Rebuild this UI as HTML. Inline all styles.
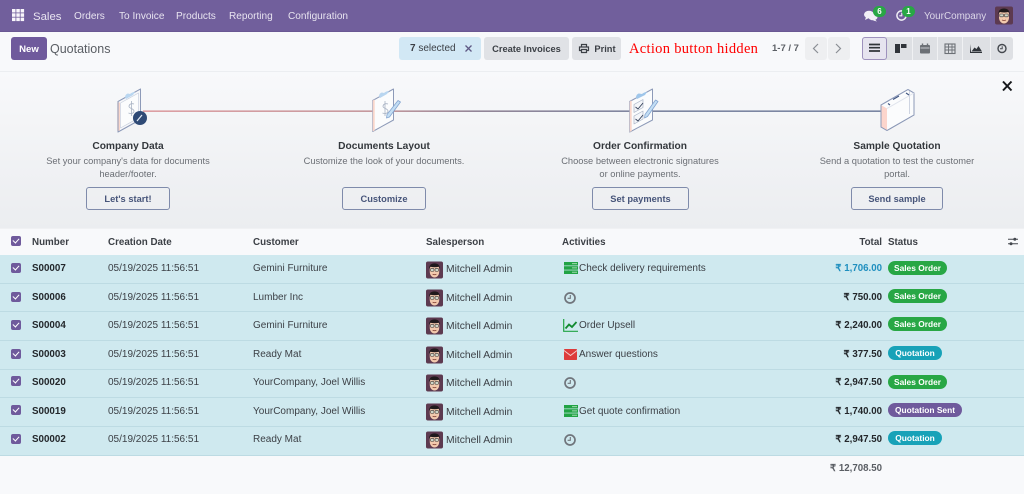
<!DOCTYPE html>
<html lang="en"><head><meta charset="utf-8"><title>Quotations</title>
<style>
html,body{margin:0;padding:0;background:#f8f9fb}
body{width:1024px;height:494px;overflow:hidden;position:relative;background:#f8f9fb;font-family:"Liberation Sans",sans-serif;font-size:10.1px;color:#3c4046;filter:blur(.3px)}
.t{position:absolute;white-space:nowrap;line-height:14px;height:14px;margin-top:1px}
.c{transform:translateX(-50%);text-align:center}
.r{text-align:right}
.b{font-weight:bold}
.box{position:absolute}
nav{position:absolute;left:0;top:0;width:1024px;height:31px;background:#715f9c;border-bottom:1px solid #6a5893}
nav .t{color:#e8e4f0;top:9px}
.btn{position:absolute;top:37px;height:23px;line-height:24px;text-align:center;border-radius:3px;background:#e0e2e6;color:#3c4046;font-weight:bold;font-size:9.3px}
.panel{position:absolute;left:0;top:71px;width:1024px;height:157px;background:linear-gradient(#f8f9fb 0%,#f4f5f7 30%,#ebedf0 100%);border-top:1px solid #eceef1}
.head{color:#3c4046;font-weight:bold;font-size:9.8px}
.desc{color:#6b6f75;font-size:9.3px}
.ttl{color:#34383d;font-weight:bold;font-size:10.2px}
.ob{position:absolute;top:187px;height:21px;line-height:23px;border:1px solid #7f8bab;border-radius:3px;text-align:center;color:#47557a;font-weight:bold;font-size:9.3px}
.row{position:absolute;left:0;width:1024px;background:#cfe9ef;border-bottom:1px solid #bddbe3;box-sizing:border-box}
.cb{position:absolute;left:11px;width:10px;height:10px;background:#6f5a9c;border-radius:2px}
.cb:after{content:"";position:absolute;left:3px;top:1px;width:3px;height:5px;border:solid #fff;border-width:0 1.4px 1.4px 0;transform:rotate(42deg)}
.badge{position:absolute;left:888px;height:14px;line-height:14px;border-radius:7px;color:#fff;text-align:center;font-size:8.4px;font-weight:bold}
.so{width:59px;background:#28a745}.qu{width:54px;background:#17a2b8}.qs{width:74px;background:#6f5a9c}
.num{left:32px;font-weight:bold;color:#23272b;font-size:9.8px}
.dt{left:108px;font-size:10px}
.cu{left:253px;font-size:10px}
.sp{left:446px;font-size:10.3px}
.ac{left:579px;font-size:10px}
.to{right:142px;font-weight:bold;color:#23272b;font-size:9.7px}
svg{position:absolute;overflow:visible}
</style></head><body>

<svg width="0" height="0" style="position:absolute"><defs>
<symbol id="av" viewBox="0 0 18 18">
<rect width="18" height="18" rx="2" fill="#5d3a50"/>
<path d="M4 8c0-3 2-5 5-5s5 2 5 5v3c0 3-2 6-5 6s-5-3-5-6z" fill="#f2c9ad"/>
<path d="M3.500 8c-.5-4 2-6 5.500-6s6 2 5.500 6l-1-2.500c-3 .8-6 .6-8.800 0z" fill="#1f1a1c"/>
<rect x="4.800" y="7.500" width="3.600" height="2.800" rx=".6" fill="#cfd6c8" stroke="#333" stroke-width=".6"/>
<rect x="9.600" y="7.500" width="3.600" height="2.800" rx=".6" fill="#cfd6c8" stroke="#333" stroke-width=".6"/>
<path d="M7 13.500c1.300.6 2.700.6 4 0" stroke="#8a4a3c" stroke-width=".8" fill="none"/>
</symbol>
<symbol id="clk" viewBox="0 0 12 12">
<circle cx="6" cy="6" r="5" fill="none" stroke="#70757c" stroke-width="1.700"/>
<path d="M6.300 3v3.300H3.600" fill="none" stroke="#70757c" stroke-width="1.100"/>
</symbol>
<symbol id="srv" viewBox="0 0 14 12">
<rect width="14" height="3.500" fill="#21a344"/><rect y="4.200" width="14" height="3.500" fill="#21a344"/><rect y="8.400" width="14" height="3.600" fill="#21a344"/>
<rect x="8" y="1.300" width="5" height=".8" fill="#bfe6c9"/><rect x="8" y="5.500" width="5" height=".8" fill="#bfe6c9"/><rect x="8" y="9.800" width="5" height=".8" fill="#bfe6c9"/>
</symbol>
</defs></svg>

<nav>
<svg style="left:12px;top:9px" width="12" height="12" viewBox="0 0 12 12" fill="#f8f6fb">
<rect width="3.500" height="3.500"/><rect x="4.300" width="3.500" height="3.500"/><rect x="8.600" width="3.500" height="3.500"/>
<rect y="4.300" width="3.500" height="3.500"/><rect x="4.300" y="4.300" width="3.500" height="3.500"/><rect x="8.600" y="4.300" width="3.500" height="3.500"/>
<rect y="8.600" width="3.500" height="3.500"/><rect x="4.300" y="8.600" width="3.500" height="3.500"/><rect x="8.600" y="8.600" width="3.500" height="3.500"/>
</svg>
<span class="t" style="left:33px;font-size:11.4px">Sales</span>
<span class="t" style="left:74px">Orders</span>
<span class="t" style="left:119px">To Invoice</span>
<span class="t" style="left:176px">Products</span>
<span class="t" style="left:229px">Reporting</span>
<span class="t" style="left:288px">Configuration</span>
<svg style="left:864px;top:10px" width="14" height="12" viewBox="0 0 14 12" fill="#f1eff6">
<ellipse cx="5" cy="4.500" rx="5" ry="3.800"/><path d="M2 7l-1 3 4-2z"/><ellipse cx="9" cy="7" rx="4.500" ry="3.300"/><path d="M11 9.500l2 2-4-1z"/></svg>
<div class="box" style="left:873px;top:6px;width:13px;height:11px;border-radius:6px;background:#28a745;color:#fff;font-size:8px;line-height:11px;text-align:center;font-weight:bold">6</div>
<svg style="left:896px;top:10px" width="11" height="11" viewBox="0 0 12 12"><circle cx="6" cy="6" r="5" fill="none" stroke="#f1eff6" stroke-width="1.600"/><path d="M6.300 3v3.300H3.600" fill="none" stroke="#f1eff6" stroke-width="1.200"/></svg>
<div class="box" style="left:902px;top:6px;width:13px;height:11px;border-radius:6px;background:#28a745;color:#fff;font-size:8px;line-height:11px;text-align:center;font-weight:bold">1</div>
<span class="t" style="left:924px;color:#dcd7e8;font-size:9.9px">YourCompany</span>
<svg style="left:995px;top:6px" width="18" height="19"><use href="#av"/></svg>
</nav>

<div class="btn" style="left:11px;width:36px;background:#6f5a9c;color:#fff;font-size:9.6px;line-height:25px">New</div>
<span class="t" style="left:50px;top:41px;font-size:12.500px;color:#5a5e64">Quotations</span>
<div class="btn" style="left:399px;width:82px;background:#d2e8f5;font-weight:normal;font-size:10px;text-align:left;box-sizing:border-box;padding-left:11px"><b>7</b> selected</div>
<svg style="left:465px;top:45px" width="7" height="7" viewBox="0 0 7 7"><path d="M.5.500l6 6M6.500.500l-6 6" stroke="#5f5a85" stroke-width="1.300"/></svg>
<div class="btn" style="left:484px;width:85px">Create Invoices</div>
<div class="btn" style="left:572px;width:49px;box-sizing:border-box;padding-left:17px">Print</div>
<svg style="left:579px;top:44px" width="10" height="9" viewBox="0 0 10 9"><path d="M2.500 3V.500h5V3M2.500 6.500H.5V3h9v3.500h-2M2.500 5.500h5v3h-5z" fill="none" stroke="#3c4046" stroke-width="1.200"/></svg>
<span class="t" style="left:629px;top:41px;font-family:'Liberation Serif',serif;font-size:14.500px;color:#f00;letter-spacing:.3px">Action button hidden</span>
<span class="t" style="left:772px;top:41px;font-size:9.500px;font-weight:bold;color:#5c6066">1-7 / 7</span>
<div class="btn" style="left:805px;width:22px;background:#eeeff1"></div>
<div class="btn" style="left:828px;width:22px;background:#eeeff1"></div>
<svg style="left:812px;top:43px" width="32" height="11" fill="none" stroke="#8a8e94" stroke-width="1.200"><path d="M6 1L1.500 5.500 6 10M24 1l4.500 4.500L24 10"/></svg>

<div class="box" style="left:862px;top:37px;width:151px;height:23px;background:#dee0e4;border-radius:3px"></div>
<div class="box" style="left:912px;top:37px;width:1px;height:23px;background:#f0f1f3"></div>
<div class="box" style="left:937px;top:37px;width:1px;height:23px;background:#f0f1f3"></div>
<div class="box" style="left:962px;top:37px;width:1px;height:23px;background:#f0f1f3"></div>
<div class="box" style="left:990px;top:37px;width:1px;height:23px;background:#f0f1f3"></div>
<div class="box" style="left:862px;top:37px;width:25px;height:23px;box-sizing:border-box;background:#e6e4ef;border:1px solid #9e92bd;border-radius:3px"></div>
<svg style="left:868px;top:43px" width="140" height="11" viewBox="0 0 140 11">
<path d="M1 1.500h11M1 4.700h11M1 8h11" stroke="#30343a" stroke-width="1.700"/>
<path d="M27 1h5v9h-5zM33 1h5.500v4H33z" fill="#30343a"/>
<rect x="52" y="2" width="10" height="8.500" rx="1" fill="#6c7076"/><path d="M54.500 .5v2M59.500 .5v2" stroke="#6c7076" stroke-width="1.400"/><path d="M52.500 5h9" stroke="#dee0e4" stroke-width=".8"/>
<rect x="77" y="1" width="10" height="9.500" fill="none" stroke="#6c7076" stroke-width="1.100"/><path d="M77 4h10M77 7h10M80.500 1v9.500M84 1v9.500" stroke="#6c7076" stroke-width=".9"/>
<path d="M102 1v9h12v-1h-11z M103.500 8.500l3-4 2 1.500 2-3 3.500 5.500z" fill="#30343a"/>
<circle cx="134" cy="5.500" r="4" fill="none" stroke="#44484e" stroke-width="1.400"/><path d="M134.200 3.200v2.500H132" fill="none" stroke="#44484e" stroke-width="1"/>
</svg>

<div class="panel"></div>

<svg style="left:0;top:0" width="1024" height="228" viewBox="0 0 1024 228">
<defs><linearGradient id="ln" gradientUnits="userSpaceOnUse" x1="143" y1="0" x2="882" y2="0">
<stop offset="0" stop-color="#d88a8f"/><stop offset=".32" stop-color="#b98288"/><stop offset=".45" stop-color="#7b6a80"/><stop offset=".7" stop-color="#5f6a8c"/><stop offset="1" stop-color="#5c6a8e"/></linearGradient></defs>
<rect x="143" y="110.500" width="740" height="1.300" fill="url(#ln)"/>

<g stroke="#8d9ab8" stroke-width="1" stroke-linejoin="round">
<path d="M118 101.500L140.500 89V119.500L118 132Z" fill="#f6f7fa"/>
<path d="M118 101.500L117.300 103V130.500L118 132L120 131V103Z" fill="#f9d6cb" stroke="none"/>
<path d="M118 101.500L140.500 89V119.500L118 132Z" fill="none"/>
<path d="M120.500 103L138.500 93V118L120.500 128Z" fill="#fbfcfd" stroke="#c9d0de" stroke-width=".7"/>
<path d="M125 97c.5-2.500 2-3.500 3-3.500l2 .5c1-1 3-2 5-2l-2 3-7 4z" fill="#b9d6f0" stroke="none"/>
<circle cx="140" cy="118" r="7" fill="#2f4a76" stroke="none"/>
<path d="M137 121l5-6" stroke="#e6edf6" stroke-width="1.200"/>
<path d="M134 104c-3-1-5 .5-5 2.500s5 2 5 4.500-3 3-5.500 2M131.500 101v15" fill="none" stroke="#a9b3c4" stroke-width=".8"/>
</g>

<g stroke="#8d9ab8" stroke-width="1" stroke-linejoin="round">
<path d="M372.700 100.500L393.500 89V120L372.700 131.500Z" fill="#fbfcfd"/>
<path d="M372.700 100.500v31l2 -1v-31z" fill="#f9d6cb" stroke="none"/>
<path d="M379 96c.5-2.500 2-3.500 3-3.500l2 .5c1-1 3-2 5-2l-2 3-7 4z" fill="#b9d6f0" stroke="none"/>
<path d="M388 104c-3-1-5 .5-5 2.500s5 2 5 4.500-3 3-5.500 2M385 101v15" fill="none" stroke="#a9b3c4" stroke-width=".8"/>
<path d="M398 100.500l2.500 1.500-11 15-3 1 .5-3.500z" fill="#c3def4" stroke="#84a5d0" stroke-width=".8"/>
</g>

<g stroke="#8d9ab8" stroke-width="1" stroke-linejoin="round">
<path d="M629.700 101.500L652.500 89V120L629.700 132Z" fill="#fbfcfd"/>
<path d="M629.700 101.500v30.500l2-1v-30.500z" fill="#f9d6cb" stroke="none"/>
<path d="M636 97c.5-2.500 2-3.500 3-3.500l3 .5c1-1 3-2 5-2l-2 3-8 4z" fill="#9fc6ea" stroke="none"/>
<path d="M634 104.500l9-5v8l-9 5zM634 116l9-5v8l-9 5z" fill="#f4f6f9" stroke="#aab4c6" stroke-width=".7"/>
<path d="M635.500 107l2.500 2 5-6M635.500 119l2.500 2 5-6" fill="none" stroke="#34405a" stroke-width=".9"/>
<path d="M655.500 100l2.500 1.500-10.500 15-3 1.500.5-3.500z" fill="#c3def4" stroke="#84a5d0" stroke-width=".8"/>
</g>

<g stroke="#8d9ab8" stroke-width="1" stroke-linejoin="round">
<path d="M881 105L908 89.500L914 93V115L887 130.500L881 127Z" fill="#fbfcfd"/>
<path d="M881 105L887 108.500V130.500L881 127Z" fill="#fcd5cc" stroke="none"/>
<path d="M881 105L908 89.500L914 93V115L887 130.500L881 127Z" fill="none"/>
<path d="M887 108.500L914 93" fill="none" stroke="#dfe3ec"/>
<path d="M909.500 91v23" fill="none" stroke="#cfd5e2"/>
<path d="M888 103.500l2 1.500M906 93l3 2M893 99.500l6-3.500" fill="none" stroke="#3f5580" stroke-width="1.100"/>
</g>

<path d="M1003 81.500l8.500 9M1011.500 81.500l-8.500 9" stroke="#16181b" stroke-width="2"/>
</svg>

<span class="t c ttl" style="left:128px;top:139px">Company Data</span>
<span class="t c desc" style="left:128px;top:153px">Set your company's data for documents</span>
<span class="t c desc" style="left:128px;top:166px">header/footer.</span>
<div class="ob" style="left:86px;width:82px">Let's start!</div>

<span class="t c ttl" style="left:384px;top:139px">Documents Layout</span>
<span class="t c desc" style="left:384px;top:153px">Customize the look of your documents.</span>
<div class="ob" style="left:342px;width:82px">Customize</div>

<span class="t c ttl" style="left:640px;top:139px">Order Confirmation</span>
<span class="t c desc" style="left:640px;top:153px">Choose between electronic signatures</span>
<span class="t c desc" style="left:640px;top:166px">or online payments.</span>
<div class="ob" style="left:592px;width:95px">Set payments</div>

<span class="t c ttl" style="left:897px;top:139px">Sample Quotation</span>
<span class="t c desc" style="left:897px;top:153px">Send a quotation to test the customer</span>
<span class="t c desc" style="left:897px;top:166px">portal.</span>
<div class="ob" style="left:851px;width:90px">Send sample</div>

<!-- header -->
<div class="box" style="left:0;top:228px;width:1024px;height:27px;background:#f8f9fb;border-top:1px solid #f0f1f3;box-sizing:border-box"></div>
<div class="cb" style="top:236px"></div>
<span class="t head" style="left:32px;top:235px">Number</span>
<span class="t head" style="left:108px;top:235px">Creation Date</span>
<span class="t head" style="left:253px;top:235px">Customer</span>
<span class="t head" style="left:426px;top:235px">Salesperson</span>
<span class="t head" style="left:562px;top:235px">Activities</span>
<span class="t head r" style="right:142px;top:235px">Total</span>
<span class="t head" style="left:888px;top:235px">Status</span>
<svg style="left:1008px;top:237px" width="10" height="9" viewBox="0 0 10 9"><path d="M0 2.200h10M0 6.800h10" stroke="#44484e" stroke-width="1"/><circle cx="6.800" cy="2.200" r="1.500" fill="#44484e"/><circle cx="3" cy="6.800" r="1.500" fill="#44484e"/></svg>

<!-- rows -->
<div class="row" style="top:255px;height:29px"></div>
<div class="cb" style="top:263px"></div>
<span class="t num" style="top:261px">S00007</span><span class="t dt" style="top:261px">05/19/2025 11:56:51</span><span class="t cu" style="top:261px">Gemini Furniture</span>
<svg style="left:426px;top:261px" width="17" height="18"><use href="#av"/></svg><span class="t sp" style="top:262px">Mitchell Admin</span>
<svg style="left:564px;top:262px" width="14" height="12"><use href="#srv"/></svg><span class="t ac" style="top:261px">Check delivery requirements</span>
<span class="t to r" style="top:261px;color:#1f8fbf">₹ 1,706.00</span><div class="badge so" style="top:261px">Sales Order</div>

<div class="row" style="top:284px;height:28px"></div>
<div class="cb" style="top:292px"></div>
<span class="t num" style="top:290px">S00006</span><span class="t dt" style="top:290px">05/19/2025 11:56:51</span><span class="t cu" style="top:290px">Lumber Inc</span>
<svg style="left:426px;top:289px" width="17" height="18"><use href="#av"/></svg><span class="t sp" style="top:291px">Mitchell Admin</span>
<svg style="left:564px;top:292px" width="12" height="12"><use href="#clk"/></svg>
<span class="t to r" style="top:290px">₹ 750.00</span><div class="badge so" style="top:289px">Sales Order</div>

<div class="row" style="top:312px;height:29px"></div>
<div class="cb" style="top:320px"></div>
<span class="t num" style="top:318px">S00004</span><span class="t dt" style="top:318px">05/19/2025 11:56:51</span><span class="t cu" style="top:318px">Gemini Furniture</span>
<svg style="left:426px;top:317px" width="17" height="18"><use href="#av"/></svg><span class="t sp" style="top:319px">Mitchell Admin</span>
<svg style="left:563px;top:319px" width="15" height="13" viewBox="0 0 15 13" fill="none"><path d="M.7 0v12.300H15" stroke="#21a344" stroke-width="1.200"/><path d="M2.500 9.500l3.500-4 3 2.500 4.500-5" stroke="#128a30" stroke-width="1.800"/></svg><span class="t ac" style="top:318px">Order Upsell</span>
<span class="t to r" style="top:318px">₹ 2,240.00</span><div class="badge so" style="top:317px">Sales Order</div>

<div class="row" style="top:341px;height:29px"></div>
<div class="cb" style="top:349px"></div>
<span class="t num" style="top:347px">S00003</span><span class="t dt" style="top:347px">05/19/2025 11:56:51</span><span class="t cu" style="top:347px">Ready Mat</span>
<svg style="left:426px;top:346px" width="17" height="18"><use href="#av"/></svg><span class="t sp" style="top:348px">Mitchell Admin</span>
<svg style="left:564px;top:349px" width="13" height="11" viewBox="0 0 13 11"><rect width="13" height="11" rx=".8" fill="#dd3b3b"/><path d="M0 1.500L6.500 6.500 13 1.500" fill="none" stroke="#f3d0d0" stroke-width=".9"/></svg><span class="t ac" style="top:347px">Answer questions</span>
<span class="t to r" style="top:347px">₹ 377.50</span><div class="badge qu" style="top:346px">Quotation</div>

<div class="row" style="top:370px;height:28px"></div>
<div class="cb" style="top:376px"></div>
<span class="t num" style="top:375px">S00020</span><span class="t dt" style="top:375px">05/19/2025 11:56:51</span><span class="t cu" style="top:375px">YourCompany, Joel Willis</span>
<svg style="left:426px;top:374px" width="17" height="18"><use href="#av"/></svg><span class="t sp" style="top:376px">Mitchell Admin</span>
<svg style="left:564px;top:377px" width="12" height="12"><use href="#clk"/></svg>
<span class="t to r" style="top:375px">₹ 2,947.50</span><div class="badge so" style="top:375px">Sales Order</div>

<div class="row" style="top:398px;height:29px"></div>
<div class="cb" style="top:405px"></div>
<span class="t num" style="top:404px">S00019</span><span class="t dt" style="top:404px">05/19/2025 11:56:51</span><span class="t cu" style="top:404px">YourCompany, Joel Willis</span>
<svg style="left:426px;top:403px" width="17" height="18"><use href="#av"/></svg><span class="t sp" style="top:405px">Mitchell Admin</span>
<svg style="left:564px;top:405px" width="14" height="12"><use href="#srv"/></svg><span class="t ac" style="top:404px">Get quote confirmation</span>
<span class="t to r" style="top:404px">₹ 1,740.00</span><div class="badge qs" style="top:403px">Quotation Sent</div>

<div class="row" style="top:427px;height:29px"></div>
<div class="cb" style="top:434px"></div>
<span class="t num" style="top:432px">S00002</span><span class="t dt" style="top:432px">05/19/2025 11:56:51</span><span class="t cu" style="top:432px">Ready Mat</span>
<svg style="left:426px;top:431px" width="17" height="18"><use href="#av"/></svg><span class="t sp" style="top:433px">Mitchell Admin</span>
<svg style="left:564px;top:434px" width="12" height="12"><use href="#clk"/></svg>
<span class="t to r" style="top:432px">₹ 2,947.50</span><div class="badge qu" style="top:431px">Quotation</div>

<span class="t to r" style="top:461px;color:#5a5e64">₹ 12,708.50</span>
</body></html>
